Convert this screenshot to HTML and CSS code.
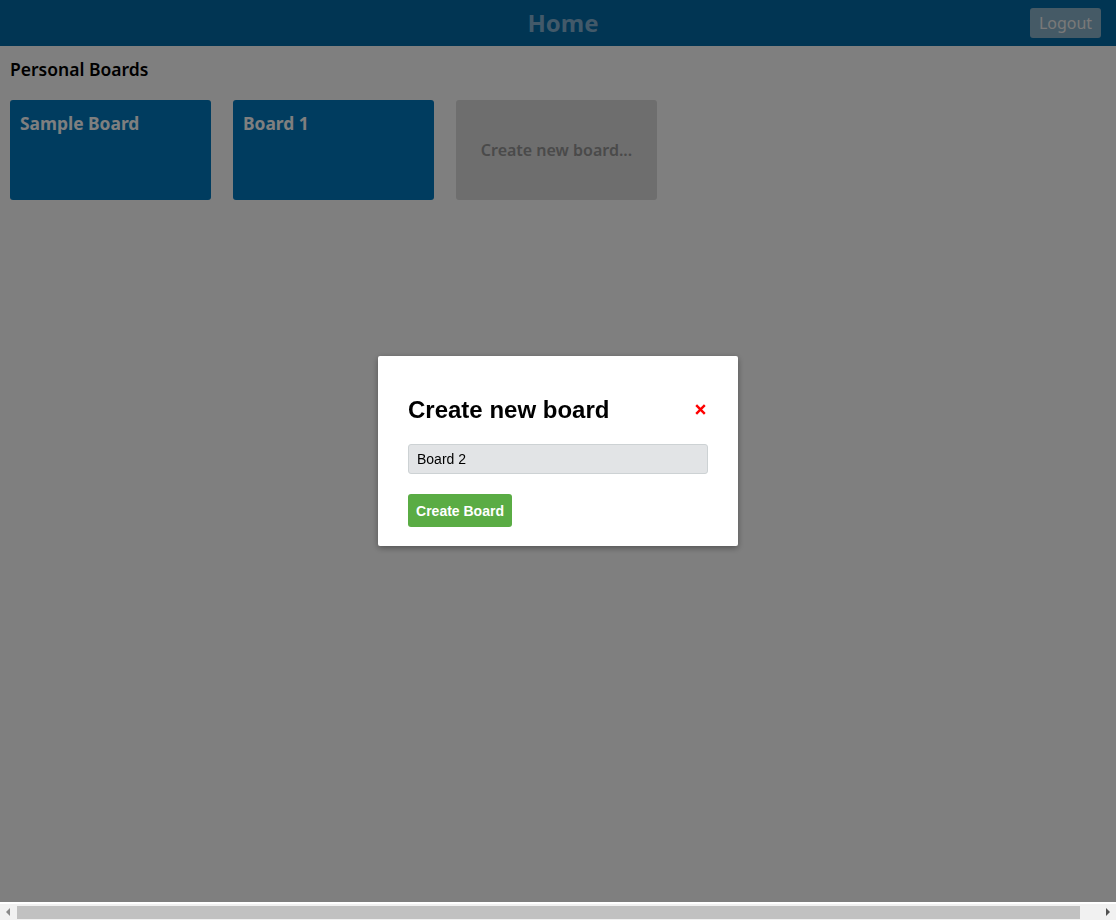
FILE: index.html
```html
<!DOCTYPE html>
<html lang="en">
<head>
<meta charset="utf-8">
<title>Home</title>
<link rel="stylesheet" href="styles.css">
</head>
<body>
<div class="page">
  <header class="topbar">
    <div class="topbar-side"></div>
    <h1 class="topbar-title">Home</h1>
    <div class="topbar-side topbar-right">
      <button class="logout">Logout</button>
    </div>
  </header>
  <main class="content">
    <h2 class="section-title">Personal Boards</h2>
    <div class="boards">
      <div class="board"><span class="board-title">Sample Board</span></div>
      <div class="board"><span class="board-title">Board 1</span></div>
      <div class="board board-new"><span>Create new board...</span></div>
    </div>
  </main>
</div>
<div class="overlay">
  <div class="modal">
    <div class="modal-head">
      <h3 class="modal-title">Create new board</h3>
      <button class="close" aria-label="Close">
        <svg width="11" height="11" viewBox="0 0 11 11"><path d="M1.2 1.2 L9.8 9.8 M9.8 1.2 L1.2 9.8" stroke="#ff0000" stroke-width="2.4" stroke-linecap="butt" fill="none"/></svg>
      </button>
    </div>
    <input class="modal-input" type="text" value="Board 2">
    <button class="create-btn">Create Board</button>
  </div>
</div>
<div class="hscroll">
  <div class="hs-arrow">
    <svg width="5" height="8" viewBox="0 0 5 8"><path d="M4 0 L0 4 L4 8 Z" fill="#8a8a8a"/></svg>
  </div>
  <div class="hs-track"><div class="hs-thumb"></div></div>
  <div class="hs-arrow">
    <svg width="5" height="8" viewBox="0 0 5 8"><path d="M1 0 L5 4 L1 8 Z" fill="#505050"/></svg>
  </div>
</div>
</body>
</html>
```

FILE: styles.css
```css
html, body {
  margin: 0;
  padding: 0;
  overflow: hidden;
}
body {
  font-family: "Noto Sans", "Open Sans", sans-serif;
  background: #ffffff;
  height: 100vh;
}
.topbar {
  height: 46px;
  background: #026aa7;
  display: flex;
  align-items: center;
  padding: 0 15px 0 25px;
}
.topbar-side {
  flex: 1;
}
.topbar-right {
  display: flex;
  justify-content: flex-end;
}
.topbar-title {
  margin: 0;
  font-size: 24px;
  font-weight: 700;
  color: #84b3d3;
  line-height: 46px;
}
.logout {
  height: 30px;
  width: 71px;
  padding: 0;
  border: none;
  border-radius: 3px;
  background: #8bb4cc;
  color: #f2f2f2;
  font-family: "Noto Sans", "Open Sans", sans-serif;
  font-size: 16px;
}
.content {
  padding: 9px 10px;
}
.section-title {
  margin: 0;
  font-size: 17.5px;
  font-weight: 600;
  color: #000;
  line-height: 28px;
}
.boards {
  display: flex;
  gap: 22px;
  margin-top: 17px;
}
.board {
  width: 201px;
  height: 100px;
  box-sizing: border-box;
  border-radius: 3px;
  background: #0079bf;
  padding: 9px 10px;
}
.board-title {
  color: #ffffff;
  font-size: 17.4px;
  font-weight: 700;
  line-height: 28px;
}
.board-new {
  background: #dcdcdc;
  display: flex;
  align-items: center;
  justify-content: center;
  padding: 0;
}
.board-new span {
  color: #949494;
  font-size: 16px;
  font-weight: 600;
}
.overlay {
  position: fixed;
  left: 0;
  right: 0;
  top: 0;
  bottom: 18px;
  background: rgba(0, 0, 0, 0.5);
  display: flex;
  align-items: center;
  justify-content: center;
}
.modal {
  width: 360px;
  box-sizing: border-box;
  background: #fff;
  border-radius: 2px;
  box-shadow: 0 2px 6px rgba(0, 0, 0, 0.35);
  padding: 40px 30px 19px;
  font-family: "Liberation Sans", Arial, sans-serif;
  display: flex;
  flex-direction: column;
  align-items: flex-start;
}
.modal-head {
  align-self: stretch;
  display: flex;
  align-items: center;
  justify-content: space-between;
}
.modal-title {
  margin: 0;
  font-size: 24px;
  font-weight: 700;
  color: #000;
  line-height: 27px;
}
.close {
  border: none;
  background: none;
  padding: 0;
  margin-right: 2px;
  display: flex;
  cursor: pointer;
}
.modal-input {
  margin-top: 21px;
  align-self: stretch;
  height: 30px;
  box-sizing: border-box;
  border: 1px solid #cdd2d4;
  border-radius: 3px;
  background: #e2e4e6;
  padding: 0 8px;
  font-family: "Liberation Sans", Arial, sans-serif;
  font-size: 14px;
  color: #000;
}
.create-btn {
  margin-top: 20px;
  height: 33px;
  width: 104px;
  padding: 0;
  border: none;
  border-radius: 3px;
  background: #5aac44;
  color: #fff;
  font-family: "Liberation Sans", Arial, sans-serif;
  font-size: 14px;
  font-weight: 700;
}
.hscroll {
  position: fixed;
  left: 0;
  right: 0;
  bottom: 0;
  height: 17px;
  background: #f1f1f1;
  display: flex;
  border-top: 1px solid #ffffff;
  box-sizing: border-box;
}
.hs-arrow {
  width: 17px;
  display: flex;
  align-items: center;
  justify-content: center;
}
.hs-track {
  flex: 1;
  display: flex;
  align-items: center;
}
.hs-thumb {
  width: 1063px;
  height: 13px;
  background: #c1c1c1;
}
```
